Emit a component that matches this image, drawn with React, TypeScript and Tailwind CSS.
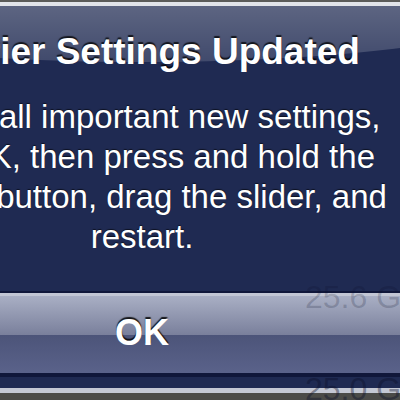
export default function App() {
  return (
    <div className="relative w-[400px] h-[400px] overflow-hidden bg-[#4b4b48] font-['Liberation_Sans',Arial,sans-serif]">
      <div className="h-[2px] bg-[#5c5c5a]" />

      {/* alert, wider than the crop, centred at x=142 */}
      <div className="relative ml-[-258px] w-[800px] border-t-4 border-b-[5px] border-t-[#e2e4ea] border-b-[#c4c8d4] bg-[#1f2a52] overflow-hidden">
        <div className="absolute left-[-50px] top-[-98px] w-[900px] h-[154px] rounded-[50%] bg-linear-to-b from-white/50 to-white/15" />

        <div className="relative pt-[26px] text-center text-white">
          <div className="text-[37px] leading-[40px] font-bold [text-shadow:0_-2px_1px_rgba(0,0,0,0.75)]">
            Carrier Settings Updated
          </div>
          <div className="mt-[25px] text-[33px] leading-[40px] [text-shadow:0_-1px_1px_rgba(0,0,0,0.6)]">
            <div>To install important new settings,</div>
            <div>tap OK, then press and hold the</div>
            <div>power button, drag the slider, and</div>
            <div>restart.</div>
          </div>
        </div>

        <div className="relative mt-[34px] mx-[30px] h-[86px] rounded-[10px] border-t-2 border-b-4 border-[#10173a] bg-[linear-gradient(to_bottom,#c2c6d4_0px,#c2c6d4_3px,#a9afc4_3px,#7a809c_52%,#4c5479_52%,#5a628a_100%)] flex items-center justify-center">
          <span className="text-[36px] leading-[40px] font-bold text-white [text-shadow:0_-2px_1px_rgba(0,0,0,0.85)]">
            OK
          </span>
        </div>
        <div className="h-[11px]" />
      </div>

      {/* list behind the translucent alert */}
      <div className="absolute left-[305px] top-[281px] text-[32px] leading-[32px] whitespace-nowrap text-[#0a0f28]/20">
        25.6 GB
      </div>
      <div className="absolute left-[305px] top-[373px] text-[32px] leading-[32px] whitespace-nowrap text-[#0a0f28]/40">
        25.0 GB
      </div>
    </div>
  );
}
